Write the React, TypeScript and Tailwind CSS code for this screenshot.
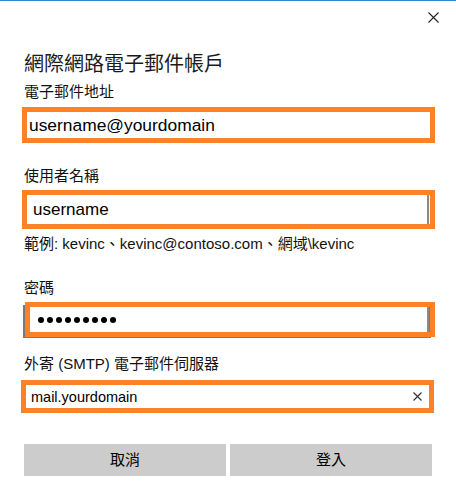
import React from "react";

const font = { fontFamily: '"Liberation Sans", "Noto Sans CJK TC", sans-serif' };

function XIcon({ size, className }: { size: number; className?: string }) {
  return (
    <svg width={size} height={size} viewBox={`0 0 ${size} ${size}`} className={className}>
      <path d={`M0.5 0.5 L${size - 0.5} ${size - 0.5} M${size - 0.5} 0.5 L0.5 ${size - 0.5}`} stroke="currentColor" strokeWidth="1.1" fill="none" />
    </svg>
  );
}

export default function App() {
  return (
    <div className="w-[456px] h-[487px] bg-white text-[#111] overflow-hidden" style={font}>
      <div className="h-[1px] bg-[#2b88d8]" />
      <div className="h-[49px] flex justify-end pt-[11px] pr-[17px]">
        <XIcon size={11} className="text-[#222]" />
      </div>

      <div className="pl-[24px] text-[20px] leading-[28px] text-[#1a1a1a]">網際網路電子郵件帳戶</div>

      <div className="mt-[4px] pl-[24px] text-[15px] leading-[20px]">電子郵件地址</div>
      <div className="mt-[5px] ml-[22px] w-[413px] h-[36px] border-[5px] border-[#fd8126] flex items-center pl-[2px]">
        <span className="text-[17.4px] leading-[20px] text-black">username@yourdomain</span>
      </div>

      <div className="mt-[23px] pl-[24px] text-[15px] leading-[20px]">使用者名稱</div>
      <div className="mt-[4px] ml-[22px] w-[413px] h-[39px] border-[5px] border-[#fd8126] flex items-center">
        <div className="flex-1 h-full flex items-center pl-[6px] border-r-[2px] border-[#8a8a8a] mr-[1px]">
          <span className="text-[17px] leading-[20px] text-black">username</span>
        </div>
      </div>

      <div className="mt-[5px] pl-[24px] text-[15px] leading-[20px]">範例: kevinc、kevinc@contoso.com、網域\kevinc</div>

      <div className="mt-[24px] pl-[24px] text-[15px] leading-[20px]">密碼</div>
      <div className="mt-[4px] ml-[23px] w-[412px] h-[35px] relative">
        <div className="absolute left-0 top-[3px] w-[408px] h-[33px] border-[2px] border-[#7a7a7a] bg-white" />
        <div className="absolute left-[2px] top-0 w-[410px] h-[35px] border-[5px] border-[#fd8126] flex items-center pl-[8px]">
          <div className="flex gap-[3px]">
            {[0, 1, 2, 3, 4, 5, 6, 7, 8].map((i) => (
              <span key={i} className="w-[6px] h-[6px] rounded-full bg-black" />
            ))}
          </div>
        </div>
        <div className="absolute left-[404px] top-[5px] w-[2px] h-[25px] bg-[#8a8a8a]" />
      </div>

      <div className="mt-[17px] pl-[24px] text-[15px] leading-[20px]">外寄 (SMTP) 電子郵件伺服器</div>
      <div className="mt-[6px] ml-[21px] w-[413px] h-[33px] border-[5px] border-[#fd8126] flex items-center pl-[5px] pr-[7px]">
        <span className="flex-1 text-[14.5px] leading-[20px] text-black">mail.yourdomain</span>
        <XIcon size={9} className="text-[#333]" />
      </div>

      <div className="mt-[31px] ml-[24px] flex gap-[4px]">
        <div className="w-[202px] h-[32px] bg-[#cccccc] flex items-center justify-center text-[15px] text-black">取消</div>
        <div className="w-[202px] h-[32px] bg-[#cccccc] flex items-center justify-center text-[15px] text-black">登入</div>
      </div>
    </div>
  );
}
